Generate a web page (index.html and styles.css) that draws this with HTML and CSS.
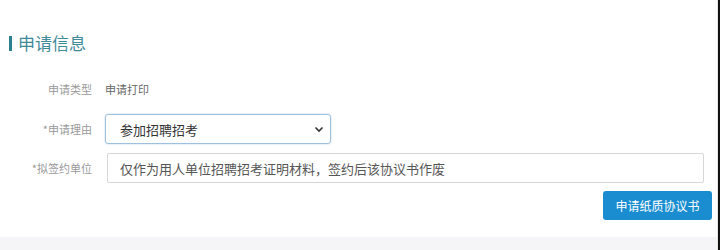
FILE: index.html
```html
<!DOCTYPE html>
<html lang="zh-CN">
<head>
<meta charset="utf-8">
<link rel="stylesheet" href="styles.css">
</head>
<body>
<div class="frame">
  <div class="panel">
    <div class="content">
      <h2 class="title"><span class="bar"></span>申请信息</h2>
      <div class="form">
        <div class="row row-text">
          <div class="label">申请类型</div>
          <div class="value">申请打印</div>
        </div>
        <div class="row row-select">
          <div class="label">*申请理由</div>
          <div class="select">
            <span>参加招聘招考</span>
            <svg class="chev" width="10" height="7" viewBox="0 0 10 7"><path d="M1.5 1.5 L5 5 L8.5 1.5" fill="none" stroke="#333" stroke-width="1.6"/></svg>
          </div>
        </div>
        <div class="row row-input">
          <div class="label">*拟签约单位</div>
          <div class="input">仅作为用人单位招聘招考证明材料，签约后该协议书作废</div>
        </div>
        <div class="actions">
          <button class="btn">申请纸质协议书</button>
        </div>
      </div>
    </div>
    <div class="footer"></div>
  </div>
  <div class="edge"></div>
</div>
</body>
</html>
```

FILE: styles.css
```css
html, body {
  margin: 0;
  padding: 0;
  background: #ffffff;
}
body {
  font-family: "Noto Sans CJK SC", "Noto Sans", sans-serif;
  width: 720px;
  height: 250px;
  overflow: hidden;
}
.frame {
  display: flex;
  height: 250px;
}
.panel {
  flex: 1;
  display: flex;
  flex-direction: column;
  border-right: 1px solid #e6e6e6;
}
.content {
  flex: 1;
  padding-top: 32px;
}
.title {
  margin: 0;
  display: flex;
  align-items: center;
  height: 22px;
  font-size: 17px;
  font-weight: normal;
  color: #3f8a98;
  padding-left: 9px;
  line-height: 22px;
}
.bar {
  width: 3px;
  height: 15px;
  background: #2b8190;
  margin-right: 6px;
}
.form {
  margin-top: 25px;
}
.row {
  display: flex;
  align-items: center;
}
.label {
  width: 92px;
  text-align: right;
  font-size: 11px;
  color: #9a9a9a;
  flex-shrink: 0;
}
.row-text {
  height: 20px;
}
.value {
  margin-left: 13px;
  font-size: 11px;
  color: #666;
}
.row-select {
  margin-top: 15px;
}
.select {
  margin-left: 13px;
  width: 204px;
  height: 28px;
  border: 1px solid #9ec0dc;
  border-radius: 3px;
  box-shadow: 0 0 2px rgba(120, 170, 210, 0.5);
  display: flex;
  align-items: center;
  justify-content: space-between;
  padding: 0 6px 0 14px;
  font-size: 13px;
  color: #333;
}
.select span { padding-top: 1px; }
.row-input {
  margin-top: 9px;
}
.input {
  margin-left: 15px;
  flex: 1;
  margin-right: 13px;
  height: 28px;
  border: 1px solid #d6d6d6;
  border-radius: 2px;
  display: flex;
  align-items: center;
  padding-left: 12px;
  font-size: 13px;
  color: #555;
}
.actions {
  display: flex;
  justify-content: flex-end;
  margin-top: 8px;
  padding-right: 5px;
}
.btn {
  width: 109px;
  height: 29px;
  border: none;
  border-radius: 3px;
  background: #1a8dd1;
  color: #fff;
  font-family: "Noto Sans CJK SC", sans-serif;
  font-size: 12px;
  padding: 0;
}
.footer {
  height: 13px;
  background: #f5f5f8;
}
.edge {
  width: 2px;
  background: #111;
}
```
